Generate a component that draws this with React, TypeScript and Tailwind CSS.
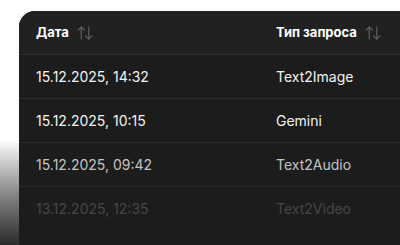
import { ArrowUpDown } from 'lucide-react'

type Row = { date: string; type: string; tone: string; line: string }

const rows: Row[] = [
    { date: '15.12.2025, 14:32', type: 'Text2Image', tone: 'text-[#f2f2f2]', line: 'border-[#2c2c2c]' },
    { date: '15.12.2025, 10:15', type: 'Gemini', tone: 'text-[#f2f2f2]', line: 'border-[#2c2c2c]' },
    { date: '15.12.2025, 09:42', type: 'Text2Audio', tone: 'text-[#c4c4c4]', line: 'border-[#282828]' },
    { date: '13.12.2025, 12:35', type: 'Text2Video', tone: 'text-[#464646]', line: 'border-transparent' },
]

export default function App() {
    return (
        <div className="w-[400px] h-[245px] bg-white flex overflow-hidden" style={{ fontFamily: 'Inter, "Noto Sans", sans-serif' }}>
            {/* left strip with fading backdrop */}
            <div className="w-[19px] shrink-0 flex flex-col">
                <div className="h-[140px] bg-white" />
                <div className="flex-1 bg-gradient-to-b from-white via-[#8a8a8a] to-[#2c2c2c]" />
            </div>

            <div className="flex-1 mt-[11px] bg-[#1c1c1c] rounded-tl-[16px] overflow-hidden">
                {/* header */}
                <div className="grid grid-cols-[240px_1fr] px-[17px] h-[44px] items-center bg-[#212121] border-b border-[#2e2e2e]">
                    <div className="flex items-center gap-[7px] text-[13px] font-bold text-white">
                        Дата
                        <ArrowUpDown className="w-[18px] h-[18px] text-[#5e5e5e]" strokeWidth={1.6} />
                    </div>
                    <div className="flex items-center gap-[7px] text-[13px] font-bold text-white">
                        Тип запроса
                        <ArrowUpDown className="w-[18px] h-[18px] text-[#5e5e5e]" strokeWidth={1.6} />
                    </div>
                </div>

                {rows.map((r) => (
                    <div key={r.date} className={`grid grid-cols-[240px_1fr] px-[17px] h-[44px] items-center border-b ${r.line} text-[14px] ${r.tone}`}>
                        <div>{r.date}</div>
                        <div>{r.type}</div>
                    </div>
                ))}
            </div>
        </div>
    )
}
